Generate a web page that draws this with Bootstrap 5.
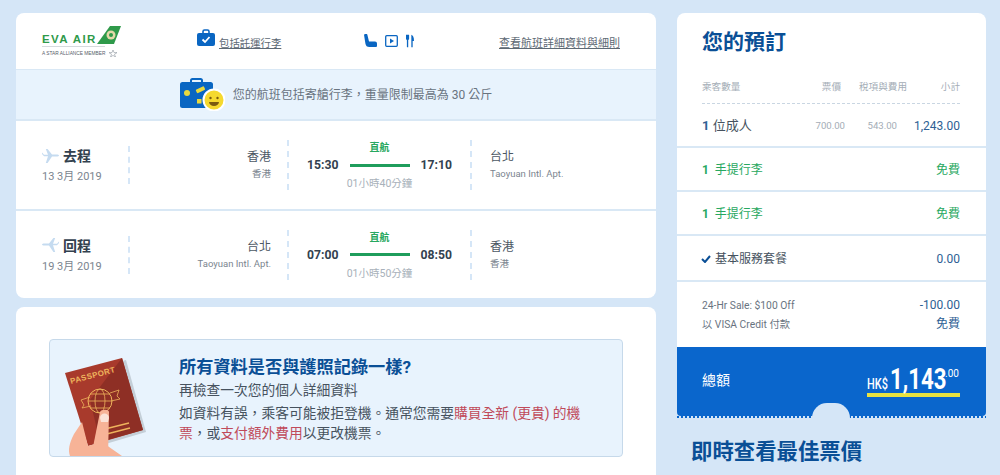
<!DOCTYPE html>
<html lang="zh-Hant">
<head>
    <meta charset="UTF-8">
    <meta name="viewport" content="width=device-width, initial-scale=1.0">
    <title>您的預訂</title>
    <link href="https://cdn.jsdelivr.net/npm/bootstrap@5.3.0/dist/css/bootstrap.min.css" rel="stylesheet">
    <style>
        html, body { height: 475px; overflow: hidden; }
        body { background: #d5e6f7; color: #3c4856; font-family: Roboto, "Noto Sans CJK SC", sans-serif; font-size: 13px; }
        .page { padding: 13px 14px 0 16px; gap: 21px; }
        .main-col { width: 640px; flex: none; }
        .side-col { width: 309px; flex: none; }
        .panel { background: #fff; border-radius: 8px; overflow: hidden; }

        /* top strip */
        .top-strip { height: 57px; padding-left: 26px; border-bottom: 1px solid #d9e8f5; }
        .logo-box { width: 155px; flex: none; }
        .logo-word { color: #2f9a4a; font: 700 11.5px/9px "Liberation Sans", sans-serif; letter-spacing: 1.4px; }
        .logo-sub { color: #56606a; font: 4.8px/7px "Liberation Sans", sans-serif; margin-top: 3px; white-space: nowrap; }
        .logo-rule { height: 1px; width: 63px; background: #d6dadd; margin-top: 2px; }
        .dotted-link { color: #5d6974; text-decoration: underline; font-size: 11px; padding-top: 6px; }
        .dotted-link.sm { font-size: 10.4px; }
        .bag-strip { height: 51px; background: #e8f3fd; border-bottom: 2px solid #d9e8f5; color: #69747f; font-size: 12px; }

        /* flight rows */
        .flight-row { height: 88px; padding-left: 26px; }
        .flight-row + .flight-row { height: 89px; border-top: 2px solid #d9e8f5; }
        .leg-col { width: 88px; height: 38px; border-right: 2px dashed #d5e6f7; flex: none; }
        .leg-title { color: #33414f; font-size: 14px; font-weight: 700; line-height: 20px; }
        .leg-date { color: #7b858f; font-size: 11px; line-height: 22px; }
        .city-col { width: 159px; height: 50px; padding: 8px 16px 0 0; border-right: 2px dashed #d5e6f7; text-align: right; flex: none; }
        .city-name { color: #4c5864; font-size: 12px; line-height: 18px; }
        .city-sub { color: #7b858f; font-size: 9.5px; line-height: 16px; }
        .time-col { width: 183px; height: 50px; border-right: 2px dashed #d5e6f7; flex: none; text-align: center; }
        .direct-tag { color: #27a860; font-size: 10px; font-weight: 700; line-height: 14px; margin-top: 1px; }
        .time-line { color: #33414f; font-size: 12.2px; font-weight: 700; line-height: 20px; gap: 11px; }
        .time-bar { width: 60px; height: 3px; background: #1f9d5c; }
        .time-len { color: #a8b1ba; font-size: 10.5px; line-height: 17px; }
        .dest-col { padding: 8px 0 0 18px; height: 50px; }

        /* passport box */
        .second-panel { margin-top: 9px; height: 200px; padding: 32px 33px; }
        .passport-box { height: 118px; background: #e8f3fd; border: 1px solid #c6d9ea; border-radius: 4px; }
        .passport-art { width: 129px; flex: none; align-self: flex-end; display: block; }
        .passport-title { color: #0a4f96; font-size: 17.2px; font-weight: 700; line-height: 26px; margin-top: 14px; }
        .passport-text { color: #46525e; font-size: 13.75px; line-height: 20px; }
        .passport-text.spaced { margin-top: 3px; width: 408px; }
        .warn { color: #c04a5a; }

        /* booking */
        .book-title { color: #0a4f96; font-size: 21px; font-weight: 700; line-height: 28px; padding: 15px 25px 0; }
        .price-head { margin: 23px 26px 0 25px; padding-bottom: 8px; border-bottom: 1px dashed #c9d6e2; color: #a4adb6; font-size: 9.6px; line-height: 16px; }
        .price-row { padding: 2px 26px 0 25px; border-bottom: 2px solid #d9e8f5; align-items: center; }
        .w-tax { width: 66px; text-align: right; }
        .w-total { width: 53px; text-align: right; }
        .w-fare { width: 52px; text-align: right; }
        .w-sum { width: 63px; text-align: right; }
        .pax-row { height: 44px; color: #46525e; }
        .pax-row b { color: #2e5f94; }
        .small-fig { color: #a4adb6; font-size: 9.6px; }
        .fig { color: #2e5f94; font-size: 12px; }
        .bag-row { height: 44px; color: #27a860; font-size: 12px; }
        .svc-row { height: 46px; color: #46525e; font-size: 12px; padding-left: 24px; }
        .promo { padding: 14px 26px 0 25px; height: 65px; }
        .promo-line { line-height: 19px; height: 19px; align-items: center; color: #69747f; font-size: 10.3px; }
        .total-box { height: 69px; background: #0a66cc; color: #fff; padding: 0 26px 0 25px; position: relative; border-radius: 0 0 4px 4px; }
        .total-box::after { content: ""; position: absolute; left: 0; right: 0; bottom: -2px; height: 2px; background: repeating-linear-gradient(90deg, #0a66cc 0 2px, transparent 2px 4px); }
        .total-notch { position: absolute; left: 135px; bottom: -2px; width: 38px; height: 15px; background: #d5e6f7; border-radius: 19px 19px 0 0; z-index: 1; }
        .total-label { font-size: 14px; padding-top: 21px; line-height: 24px; }
        .total-amount { margin-top: 11px; border-bottom: 4px solid #e9e340; line-height: 31px; height: 39px; white-space: nowrap; width: 93px; }
        .amount-cur { font-size: 14px; font-weight: 500; display: inline-block; transform: scaleX(.78); transform-origin: left; width: 23px; }
        .amount-main { font-size: 30px; font-weight: 700; display: inline-block; transform: scaleX(.74); transform-origin: left; width: 55px; }
        .amount-cents { font-size: 10px; vertical-align: 12px; }
        .price-title { color: #0a4f96; font-size: 21.4px; font-weight: 700; line-height: 28px; margin: 22px 0 0 14px; }
    </style>
</head>
<body>
<div class="page d-flex">
    <div class="main-col">
        <div class="panel">
            <div class="top-strip d-flex align-items-center">
                <div class="logo-box">
                    <div class="d-flex align-items-end">
                        <span class="logo-word">EVA AIR</span>
                        <svg width="24" height="18" viewBox="0 0 24 18">
                            <polygon points="0,18 13,0 24,0 17,18" fill="#2f9a4a"/>
                            <circle cx="14" cy="9" r="4.500" fill="#e4d9a8"/>
                            <circle cx="14" cy="9" r="2" fill="#2f9a4a"/>
                        </svg>
                    </div>
                    <div class="logo-rule"></div>
                    <div class="logo-sub d-flex align-items-center">A STAR ALLIANCE MEMBER
                        <svg width="8" height="7" viewBox="0 0 8 7" class="ms-1"><polygon points="4,0 5,2.600 8,2.600 5.500,4.300 6.500,7 4,5.400 1.500,7 2.500,4.300 0,2.600 3,2.600" fill="none" stroke="#7b858f" stroke-width=".5"/></svg>
                    </div>
                </div>
                <div class="d-flex align-items-center" style="width:167px">
                    <svg width="18" height="17" viewBox="0 0 18 17" class="me-1 mb-2">
                        <path d="M6 4V2.500A1.500 1.500 0 0 1 7.500 1h3A1.500 1.500 0 0 1 12 2.500V4" fill="none" stroke="#0a66c2" stroke-width="1.600"/>
                        <rect y="4" width="18" height="13" rx="2" fill="#0a66c2"/>
                        <path d="M5.500 10.500l2.500 2.500 4.500-5" fill="none" stroke="#fff" stroke-width="1.800"/>
                    </svg>
                    <span class="dotted-link sm">包括託運行李</span>
                </div>
                <div class="d-flex align-items-center" style="width:135px;gap:8px">
                    <svg width="13" height="14" viewBox="0 0 13 14">
                        <path d="M0 .8C0 .2 3 -.3 3.300 .6L5 7.500h6a2 2 0 0 1 2 2V12a1 1 0 0 1-1 1H5.500C3 13 1.800 12 1.400 9.500z" fill="#0a66c2"/>
                    </svg>
                    <svg width="13" height="12" viewBox="0 0 13 12">
                        <rect x=".7" y=".7" width="11.600" height="10.600" rx="1" fill="none" stroke="#0a66c2" stroke-width="1.300"/>
                        <polygon points="5,3.500 9,6 5,8.500" fill="#0a66c2"/>
                    </svg>
                    <svg width="8" height="14" viewBox="0 0 9 14">
                        <path d="M0 0v4.500a1.500 1.500 0 0 0 1 1.400V14h1.500V5.900a1.500 1.500 0 0 0 1-1.400V0z" fill="#0a66c2"/>
                        <path d="M6 14V0c2 .5 3 3 3 7H7.500v7z" fill="#0a66c2"/>
                    </svg>
                </div>
                <span class="dotted-link">查看航班詳細資料與細則</span>
            </div>
            <div class="bag-strip d-flex align-items-center justify-content-center">
                <svg width="45" height="33" viewBox="0 0 45 33" class="me-2">
                    <path d="M11 5V2.500A1.500 1.500 0 0 1 12.500 1h8A1.500 1.500 0 0 1 22 2.500V5" fill="none" stroke="#0a66c2" stroke-width="2"/>
                    <rect y="4" width="33" height="26" rx="2.500" fill="#0a66c2"/>
                    <circle cx="7" cy="15" r="3" fill="#e9d93e"/>
                    <rect x="16" y="10" width="9" height="4" rx="1" fill="#e9d93e" transform="rotate(-25 20 12)"/>
                    <rect x="17" y="21" width="4.500" height="4.500" fill="#e9d93e"/>
                    <circle cx="34" cy="22" r="10.500" fill="#f5d92f" stroke="#fff" stroke-width="2"/>
                    <circle cx="30.500" cy="20" r="1.200" fill="#7a5a10"/>
                    <circle cx="37.500" cy="20" r="1.200" fill="#7a5a10"/>
                    <path d="M29 24h10a5 4 0 0 1-10 0z" fill="#7a5a10"/>
                </svg>
                <span>您的航班包括寄艙行李，重量限制最高為 30 公斤</span>
            </div>
            <div class="flight-row d-flex align-items-center">
                <div class="leg-col">
                    <div class="leg-title d-flex align-items-center">
                        <svg width="17" height="15" viewBox="0 0 17 15" class="me-1">
                            <path d="M0 5l2 2.200h4L3.800 14h1.800L10 7.600h4.500c1.500 0 2.500-.5 2.500-1.100s-1-1.100-2.500-1.100H10L5.600 0H3.800L6 5.800H2L0 3.500z" fill="#c5dbf0"/>
                        </svg>
                        <span>去程</span>
                    </div>
                    <div class="leg-date">13 3月 2019</div>
                </div>
                <div class="city-col">
                    <div class="city-name">香港</div>
                    <div class="city-sub">香港</div>
                </div>
                <div class="time-col">
                    <div class="direct-tag">直航</div>
                    <div class="time-line d-flex align-items-center justify-content-center">
                        <span>15:30</span><span class="time-bar"></span><span>17:10</span>
                    </div>
                    <div class="time-len">01小時40分鐘</div>
                </div>
                <div class="dest-col">
                    <div class="city-name">台北</div>
                    <div class="city-sub">Taoyuan Intl. Apt.</div>
                </div>
            </div>
            <div class="flight-row d-flex align-items-center">
                <div class="leg-col">
                    <div class="leg-title d-flex align-items-center">
                        <svg width="17" height="15" viewBox="0 0 17 15" class="me-1">
                            <path d="M17 5l-2 2.200h-4L13.200 14h-1.800L7 7.600H2.500C1 7.600 0 7.100 0 6.500s1-1.100 2.500-1.100H7L11.400 0h1.800L11 5.800h4L17 3.500z" fill="#c5dbf0"/>
                        </svg>
                        <span>回程</span>
                    </div>
                    <div class="leg-date">19 3月 2019</div>
                </div>
                <div class="city-col">
                    <div class="city-name">台北</div>
                    <div class="city-sub">Taoyuan Intl. Apt.</div>
                </div>
                <div class="time-col">
                    <div class="direct-tag">直航</div>
                    <div class="time-line d-flex align-items-center justify-content-center">
                        <span>07:00</span><span class="time-bar"></span><span>08:50</span>
                    </div>
                    <div class="time-len">01小時50分鐘</div>
                </div>
                <div class="dest-col">
                    <div class="city-name">香港</div>
                    <div class="city-sub">香港</div>
                </div>
            </div>
        </div>
        <div class="panel second-panel">
            <div class="passport-box d-flex">
                <svg class="passport-art" width="129" height="116" viewBox="0 0 129 116">
                    <polygon points="19,36 76,20 96,92 42,108" fill="#c4cfd8"/>
                    <polygon points="15,33 72,18 93,90 38,106" fill="#a83a2c"/>
                    <polygon points="72,18 93,90 50,102 40,60" fill="#8e2f25"/>
                    <text x="21" y="44" fill="#eeb35c" font-family="Liberation Sans, sans-serif" font-size="8" font-weight="700" transform="rotate(-15 21 44)" textLength="46">PASSPORT</text>
                    <circle cx="50" cy="61" r="12" fill="none" stroke="#eeb35c" stroke-width="1"/>
                    <ellipse cx="50" cy="61" rx="5" ry="12" fill="none" stroke="#eeb35c" stroke-width=".8"/>
                    <path d="M38 61h24M40 54h20M40 68h20" stroke="#eeb35c" stroke-width=".8"/>
                    <path d="M40 57l-9 3 3 5-2 3 9-2M60 53l9-3-2 6 3 3-9 2" fill="none" stroke="#eeb35c" stroke-width=".8"/>
                    <path d="M47 91l32-8M49 96l31-8" stroke="#eeb35c" stroke-width="1.300"/>
                    <path d="M20 116c-2-6-1-12 4-22l8-12 6 24 14-4 20 14z" fill="#f7b397"/>
                    <path d="M42 112l8-40c1-3 9-3 9 0l-1 46H42z" fill="#f7b397"/>
                    <path d="M50 78c0-6 9-6 9 0l-1 4h-7z" fill="#fbe3d8"/>
                </svg>
                <div>
                    <div class="passport-title">所有資料是否與護照記錄一樣?</div>
                    <div class="passport-text">再檢查一次您的個人詳細資料</div>
                    <div class="passport-text spaced">如資料有誤，乘客可能被拒登機。通常您需要<span class="warn">購買全新 (更貴) 的機票</span>，或<span class="warn">支付額外費用</span>以更改機票。</div>
                </div>
            </div>
        </div>
    </div>

    <div class="side-col">
        <div class="panel" style="overflow:visible">
            <div class="book-title">您的預訂</div>
            <div class="price-head d-flex">
                <span class="flex-grow-1">乘客數量</span>
                <span>票價</span>
                <span class="w-tax">稅項與費用</span>
                <span class="w-total">小計</span>
            </div>
            <div class="price-row pax-row d-flex">
                <span class="flex-grow-1"><b>1</b> 位成人</span>
                <span class="small-fig">700.00</span>
                <span class="small-fig w-fare">543.00</span>
                <span class="fig w-sum">1,243.00</span>
            </div>
            <div class="price-row bag-row d-flex justify-content-between">
                <span><b>1</b>&nbsp; 手提行李</span><span>免費</span>
            </div>
            <div class="price-row bag-row d-flex justify-content-between">
                <span><b>1</b>&nbsp; 手提行李</span><span>免費</span>
            </div>
            <div class="price-row svc-row d-flex justify-content-between">
                <span class="d-flex align-items-center">
                    <svg width="10" height="8" viewBox="0 0 10 8" class="me-1"><path d="M1 4l3 3 5-6" fill="none" stroke="#0a4f96" stroke-width="2"/></svg>基本服務套餐
                </span>
                <span class="fig">0.00</span>
            </div>
            <div class="promo">
                <div class="promo-line d-flex justify-content-between"><span>24-Hr Sale: $100 Off</span><span class="fig">-100.00</span></div>
                <div class="promo-line d-flex justify-content-between"><span>以 VISA Credit 付款</span><span class="fig">免費</span></div>
            </div>
            <div class="total-box d-flex justify-content-between">
                <span class="total-label">總額</span>
                <div class="total-amount"><span class="amount-cur">HK$</span><span class="amount-main">1,143</span><span class="amount-cents">.00</span></div>
                <span class="total-notch"></span>
            </div>
        </div>
        <div class="price-title">即時查看最佳票價</div>
    </div>
</div>
<script src="https://cdn.jsdelivr.net/npm/bootstrap@5.3.0/dist/js/bootstrap.bundle.min.js"></script>
</body>
</html>
